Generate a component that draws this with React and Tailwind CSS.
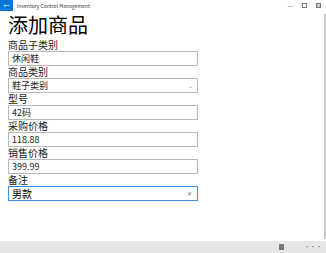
import React from 'react';

const font = { fontFamily: '"Noto Sans CJK SC", "Noto Sans", sans-serif' };

const Field = ({ label, children }) => (
  <div className="flex flex-col">
    <div className="text-[10px] leading-[12px] text-[#1a1a1a] h-[12px]">{label}</div>
    {children}
  </div>
);

const Box = ({ value, active, select }) => (
  <div
    className={`w-[190px] h-[15px] flex items-center px-[3px] text-[9px] leading-none bg-white border ${
      active ? 'border-[#3b8fdc]' : 'border-[#b8b8b8]'
    }`}
  >
    <span className={`flex-1 ${active ? 'text-[10px] text-black' : 'text-[#222]'}`}>{value}</span>
    {select && <span className="text-[6px] text-[#888] pr-[1px]">⌄</span>}
    {active && <span className="text-[6px] text-[#777] pr-[2px]">✕</span>}
  </div>
);

const App = () => {
  return (
    <div className="w-[326px] h-[253px] bg-white flex flex-col overflow-hidden" style={font}>
      <div className="h-[11px] flex items-center">
        <div className="w-[13px] h-[11px] bg-[#0078d7] flex items-center justify-center text-white text-[6px]">←</div>
        <div className="ml-[4px] text-[5px] text-[#333] flex-1">Inventory Control Management</div>
        <div className="flex items-center gap-[9px] pr-[5px] text-[6px] text-[#666]">
          <span>—</span>
          <span className="w-[5px] h-[5px] border border-[#777]"></span>
          <span className="w-[5px] h-[5px] border border-[#777] bg-[#ccc]"></span>
        </div>
      </div>
      <div className="flex flex-1">
        <div className="flex-1 flex flex-col pl-[8px]">
          <div className="text-[20px] leading-[20px] h-[20px] mt-[4px] text-black">添加商品</div>
          <div className="flex flex-col mt-[4px]">
            <Field label="商品子类别"><Box value="休闲鞋" /></Field>
            <Field label="商品类别"><Box value="鞋子类别" select /></Field>
            <Field label="型号"><Box value="42码" /></Field>
            <Field label="采购价格"><Box value="118.88" /></Field>
            <Field label="销售价格"><Box value="399.99" /></Field>
            <Field label="备注"><Box value="男款" active /></Field>
          </div>
        </div>
        <div className="w-[2px] bg-[#c8c8c8] mt-[3px] mb-[2px]"></div>
      </div>
      <div className="h-[12px] bg-[#e6e6e6] flex items-center justify-end pr-[4px] gap-[20px]">
        <div className="w-[5px] h-[6px] bg-[#777]"></div>
        <div className="text-[6px] text-[#666] leading-none">···</div>
      </div>
    </div>
  );
};

export default App;
